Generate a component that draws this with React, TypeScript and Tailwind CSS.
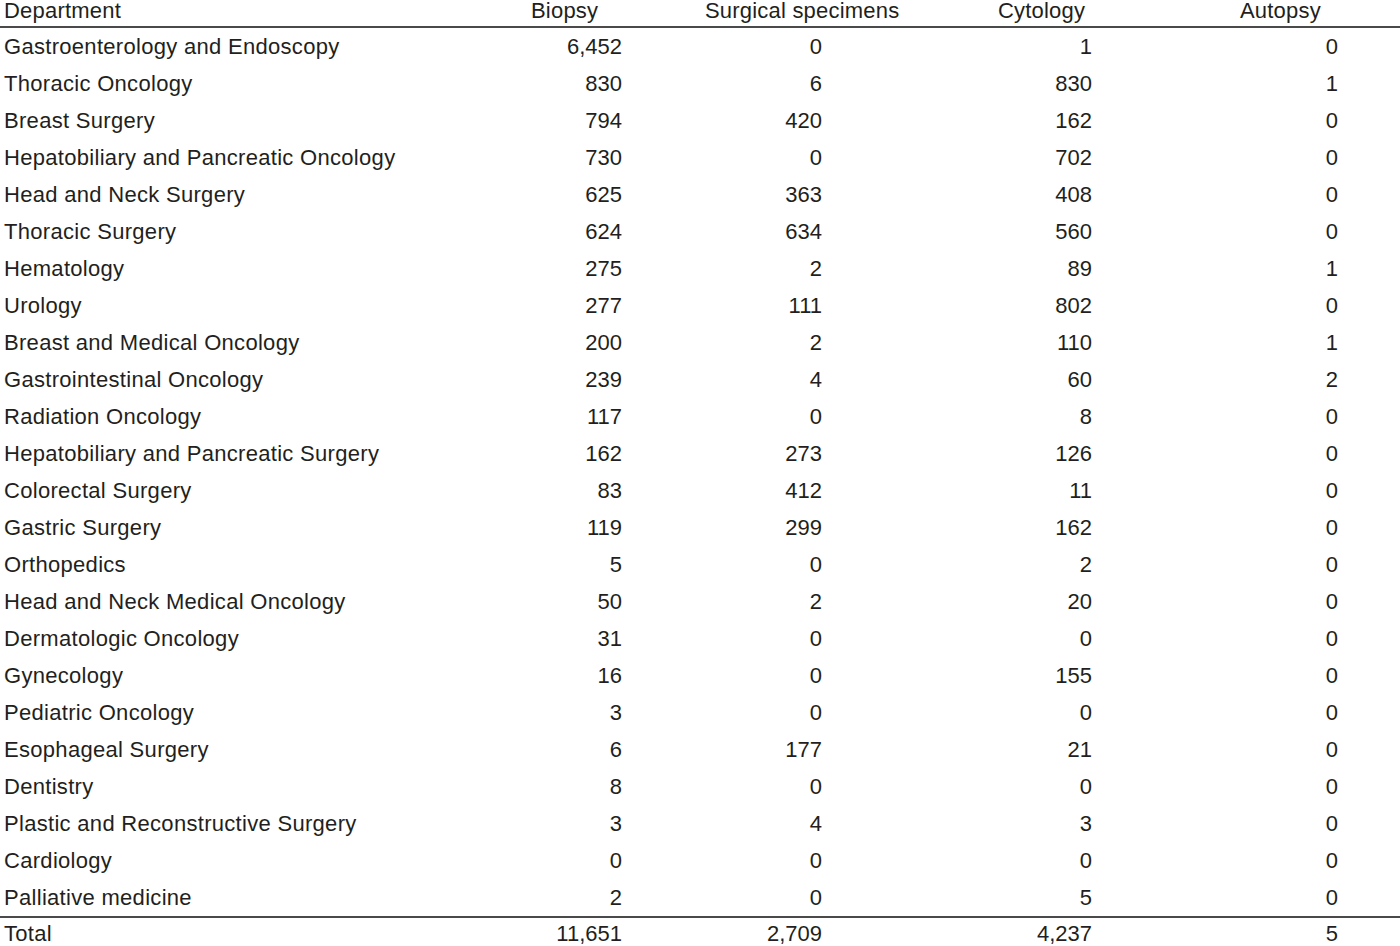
import React from 'react';

type Row = [string, string, string, string, string];

const rows: Row[] = [
  ['Gastroenterology and Endoscopy', '6,452', '0', '1', '0'],
  ['Thoracic Oncology', '830', '6', '830', '1'],
  ['Breast Surgery', '794', '420', '162', '0'],
  ['Hepatobiliary and Pancreatic Oncology', '730', '0', '702', '0'],
  ['Head and Neck Surgery', '625', '363', '408', '0'],
  ['Thoracic Surgery', '624', '634', '560', '0'],
  ['Hematology', '275', '2', '89', '1'],
  ['Urology', '277', '111', '802', '0'],
  ['Breast and Medical Oncology', '200', '2', '110', '1'],
  ['Gastrointestinal Oncology', '239', '4', '60', '2'],
  ['Radiation Oncology', '117', '0', '8', '0'],
  ['Hepatobiliary and Pancreatic Surgery', '162', '273', '126', '0'],
  ['Colorectal Surgery', '83', '412', '11', '0'],
  ['Gastric Surgery', '119', '299', '162', '0'],
  ['Orthopedics', '5', '0', '2', '0'],
  ['Head and Neck Medical Oncology', '50', '2', '20', '0'],
  ['Dermatologic Oncology', '31', '0', '0', '0'],
  ['Gynecology', '16', '0', '155', '0'],
  ['Pediatric Oncology', '3', '0', '0', '0'],
  ['Esophageal Surgery', '6', '177', '21', '0'],
  ['Dentistry', '8', '0', '0', '0'],
  ['Plastic and Reconstructive Surgery', '3', '4', '3', '0'],
  ['Cardiology', '0', '0', '0', '0'],
  ['Palliative medicine', '2', '0', '5', '0'],
];

function DataRow({ row, className }: { row: Row; className: string }) {
  return (
    <div className={`grid grid-cols-[500px_122px_200px_270px_246px_1fr] ${className}`}>
      <div className="pl-[4px] tracking-[0.3px]">{row[0]}</div>
      <div className="text-right">{row[1]}</div>
      <div className="text-right">{row[2]}</div>
      <div className="text-right">{row[3]}</div>
      <div className="text-right">{row[4]}</div>
      <div />
    </div>
  );
}

export default function App() {
  return (
    <div className="h-screen w-full overflow-hidden bg-white text-[#231f20] text-[22px] font-['Liberation_Sans',Arial,sans-serif]">
      {/* Header */}
      <div className="grid h-[26px] grid-cols-[531px_174px_293px_242px_1fr] leading-[21px] tracking-[0.2px]">
        <div className="pl-[4px]">Department</div>
        <div>Biopsy</div>
        <div>Surgical specimens</div>
        <div>Cytology</div>
        <div>Autopsy</div>
      </div>
      <div className="h-[2px] bg-[#4a4a4a]" />

      {/* Body */}
      {rows.map((r) => (
        <DataRow key={r[0]} row={r} className="h-[37px] items-center leading-none" />
      ))}

      <div className="h-[2px] bg-[#4a4a4a]" />
      <DataRow
        row={['Total', '11,651', '2,709', '4,237', '5']}
        className="h-[28px] items-end leading-[24px]"
      />
    </div>
  );
}
